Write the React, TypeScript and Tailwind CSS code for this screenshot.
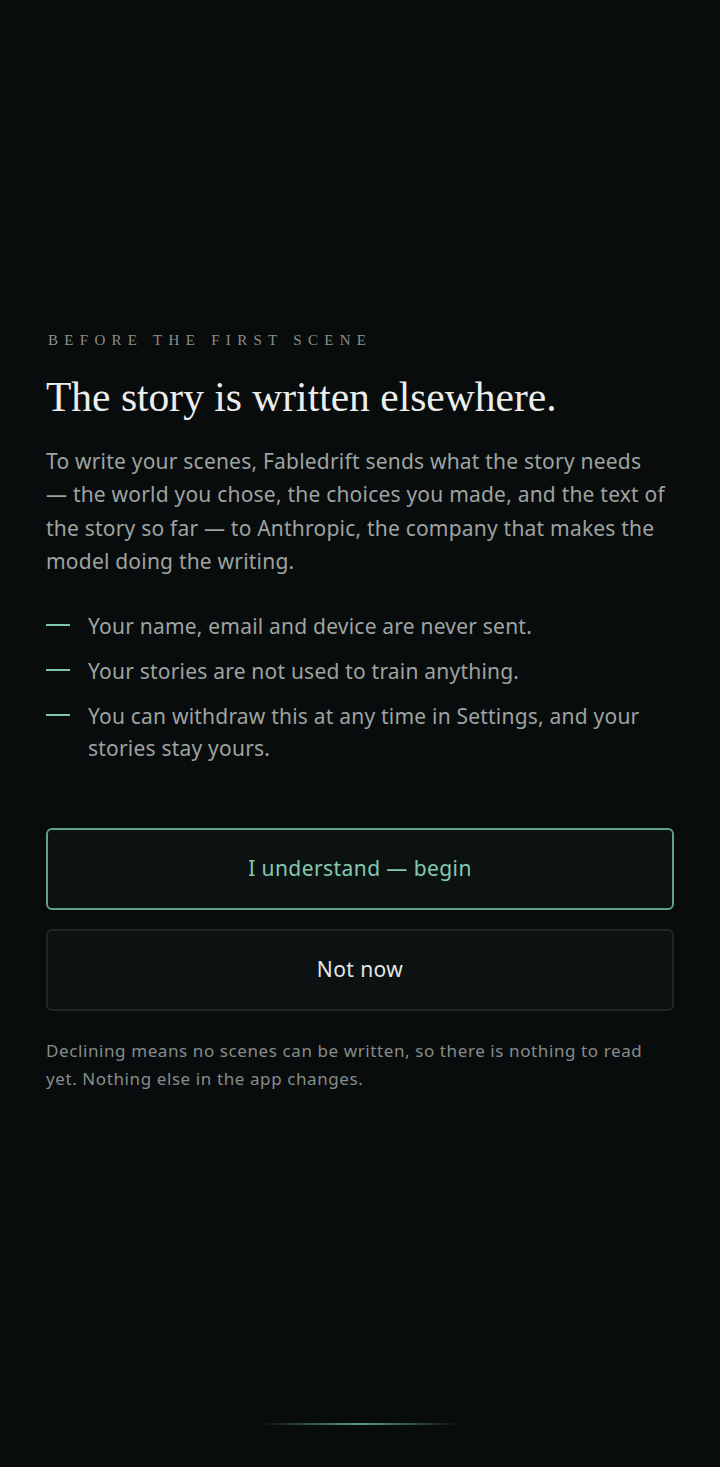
import React from 'react';

const sans = { fontFamily: '"Noto Sans", "Open Sans", sans-serif' };
const serif = { fontFamily: '"Liberation Serif", "DejaVu Serif", serif' };

// non-breaking space after the dashes keeps "— the" together, as in the design
const intro =
  'To write your scenes, Fabledrift sends what the story needs —\u00a0the world you chose, the choices you made, and the text of the story so far —\u00a0to Anthropic, the company that makes the model doing the writing.';

const points = [
  'Your name, email and device are never sent.',
  'Your stories are not used to train anything.',
  'You can withdraw this at any time in Settings, and your stories stay yours.',
];

export default function App() {
  return (
    <div className="min-h-[1467px] bg-[#080c0c] flex flex-col" style={sans}>
      <div className="flex-1 px-[46px] pt-[329px]">
        <p className="text-[15px] tracking-[0.42em] text-[#8a8f8d] uppercase pl-[2px]" style={serif}>
          Before the first scene
        </p>

        <h1 className="mt-[20px] text-[41.5px] leading-[50px] text-[#eceeed]" style={serif}>
          The story is written elsewhere.
        </h1>

        <p className="mt-[23px] mr-[-6px] text-[21px] tracking-[0.01em] leading-[33.5px] text-[#9ea3a1]">
          {intro}
        </p>

        <ul className="mt-[31px] flex flex-col gap-[13px]">
          {points.map(p => (
            <li key={p} className="flex items-start gap-[18px]">
              <span className="mt-[14px] block w-[24px] h-[2px] bg-[#7cc6ac] shrink-0" />
              <span className="text-[21px] tracking-[0.01em] leading-[32px] text-[#9ea3a1]">{p}</span>
            </li>
          ))}
        </ul>

        <div className="mt-[64px] flex flex-col gap-[19px]">
          <button className="h-[82px] w-full rounded-[6px] border-2 border-[#629e89] bg-[#0b1211] text-[21px] tracking-[0.02em] text-[#86c9b0]">
            I understand — begin
          </button>
          <button className="h-[82px] w-full rounded-[6px] border-2 border-[#1c2825] bg-[#0b1211] text-[21px] tracking-[0.02em] text-[#e3e6e4]">
            Not now
          </button>
        </div>

        <p className="mt-[26px] text-[17px] tracking-[0.035em] leading-[28px] text-[#878c8a]">
          Declining means no scenes can be written, so there is nothing to read yet. Nothing else in the app changes.
        </p>
      </div>

      <div className="flex justify-center pb-[42px]">
        <div className="h-[2px] w-[200px] bg-gradient-to-r from-transparent via-[#5c9a85] to-transparent" />
      </div>
    </div>
  );
}
